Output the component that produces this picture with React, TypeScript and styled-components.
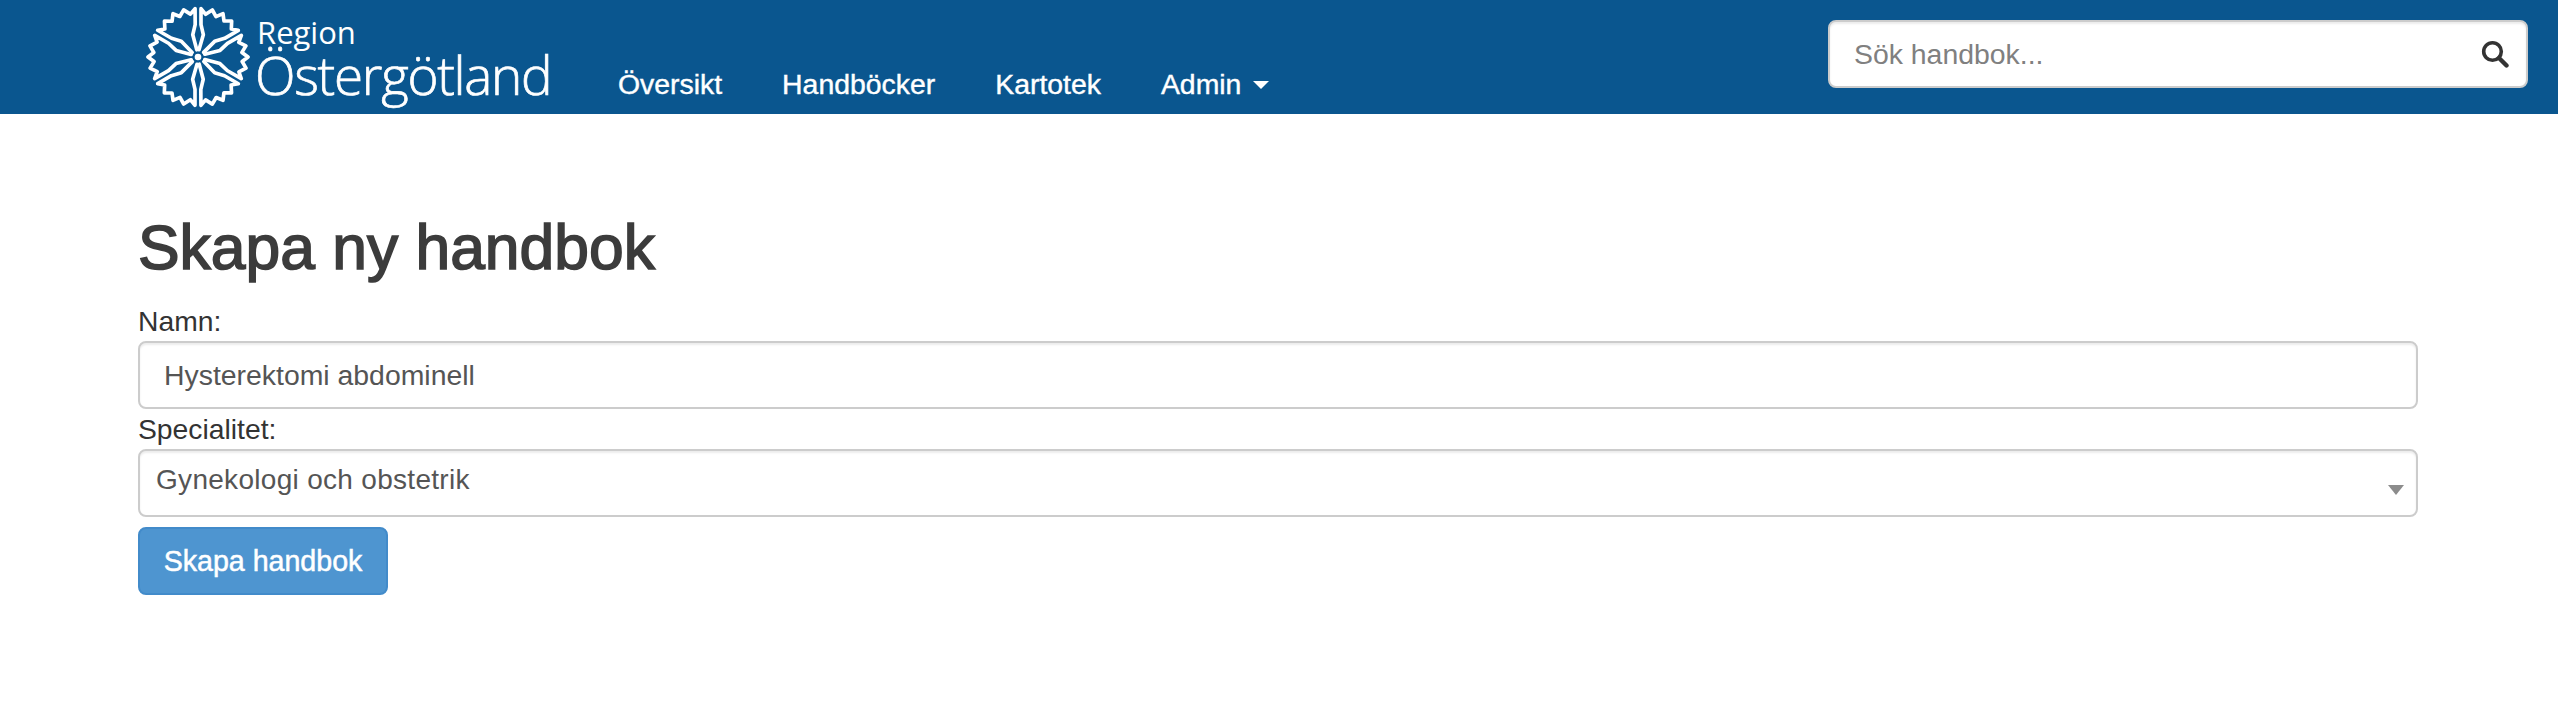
import React from 'react'
import styled, { createGlobalStyle } from 'styled-components'

const GlobalStyle = createGlobalStyle`
  * {
    box-sizing: border-box;
  }
  body {
    margin: 0;
    background: #fff;
    color: #333;
    font-family: 'Liberation Sans', Arial, sans-serif;
    font-size: 28px;
  }
`

const Header = styled.header`
  display: flex;
  align-items: flex-start;
  justify-content: space-between;
  height: 114px;
  padding: 0 30px 0 146px;
  background: #0a568f;
`

const Left = styled.div`
  display: flex;
  align-items: stretch;
  height: 100%;
`

const Brand = styled.a`
  display: flex;
  align-items: flex-start;
  gap: 5px;
  width: 472px;
  padding-top: 5px;
  color: #fff;
`

const BrandText = styled.div`
  display: flex;
  flex-direction: column;
  padding-top: 11px;
  font-family: 'Open Sans', 'Noto Sans', sans-serif;
`

const BrandTop = styled.span`
  margin-left: 2px;
  font-size: 31px;
  font-weight: 400;
  line-height: 32px;
`

const BrandBottom = styled.span`
  margin-top: 1px;
  font-size: 53px;
  font-weight: 300;
  line-height: 52px;
  letter-spacing: -1.3px;
  -webkit-text-stroke: 0.7px #fff;
`

const Nav = styled.nav`
  display: flex;
  align-items: flex-end;
  gap: 60px;
  padding-bottom: 14px;
`

const NavLink = styled.a`
  display: flex;
  align-items: center;
  gap: 12px;
  color: #fff;
  font-size: 28.4px;
  line-height: 32px;
  white-space: nowrap;
  -webkit-text-stroke: 0.4px #fff;
`

const Caret = styled.span`
  margin-top: 2px;
  border-top: 8px solid #fff;
  border-left: 8px solid transparent;
  border-right: 8px solid transparent;
`

const SearchBox = styled.div`
  position: relative;
  width: 700px;
  height: 68px;
  margin-top: 20px;
`

const SearchInput = styled.input`
  width: 100%;
  height: 100%;
  padding: 0 60px 0 24px;
  border: 2px solid #ccc;
  border-radius: 8px;
  box-shadow: inset 0 2px 2px rgba(0, 0, 0, 0.075);
  color: #555;
  font-family: inherit;
  font-size: 28.4px;
  outline: none;
  &::placeholder {
    color: #808080;
    opacity: 1;
  }
`

const SearchGlyph = styled.svg`
  position: absolute;
  top: 20px;
  right: 19px;
  width: 28px;
  height: 28px;
  color: #333;
`

const Main = styled.main`
  padding: 0 140px 0 138px;
`

const Title = styled.h1`
  margin: 99px 0 0;
  color: #3c3c3c;
  font-size: 62.4px;
  font-weight: 400;
  line-height: 70px;
  -webkit-text-stroke: 1.6px #3c3c3c;
`

const Form = styled.form`
  display: flex;
  flex-direction: column;
  align-items: flex-start;
  margin-top: 18px;
`

const Label = styled.label`
  display: block;
  color: #333;
  font-size: 28.3px;
  line-height: 40px;
`

const TextField = styled.input`
  display: block;
  width: 100%;
  height: 68px;
  padding: 0 24px;
  border: 2px solid #ccc;
  border-radius: 8px;
  box-shadow: inset 0 2px 2px rgba(0, 0, 0, 0.075);
  color: #555;
  font-family: inherit;
  font-size: 28.4px;
  outline: none;
`

const SelectWrap = styled.div`
  position: relative;
  width: 100%;
`

const SelectField = styled.select`
  display: block;
  width: 100%;
  height: 68px;
  padding: 0 16px 8px;
  border: 2px solid #ccc;
  border-radius: 8px;
  background: #fff;
  box-shadow: inset 0 2px 2px rgba(0, 0, 0, 0.075);
  color: #555;
  font-family: inherit;
  font-size: 28px;
  letter-spacing: 0.3px;
  appearance: none;
  outline: none;
`

const SelectArrow = styled.span`
  position: absolute;
  top: 36px;
  right: 14px;
  border-top: 10px solid #8c8c8c;
  border-left: 8px solid transparent;
  border-right: 8px solid transparent;
`

const SubmitButton = styled.button`
  margin-top: 10px;
  width: 250px;
  height: 68px;
  padding: 0;
  border: 2px solid #428bca;
  border-radius: 8px;
  background: #4e95d0;
  color: #fff;
  font-family: inherit;
  font-size: 28.6px;
  -webkit-text-stroke: 0.5px #fff;
`

// one petal; the next one is the same shape turned by 60 degrees
const PETAL =
  'M3 -22 L16 -67 L9 -97 L9 -145 L23 -128 L43 -141 L54 -121 L75 -130 L78 -108 L101 -108 L100 -84 L121 -80 L80 -56 L50 -47 L17 -14'

const Flower = () => (
  <svg width="104" height="104" viewBox="-156 -156 312 312" fill="none" style={{ flex: 'none' }}>
    {[0, 60, 120, 180, 240, 300].map((angle) => (
      <path
        key={angle}
        d={PETAL}
        transform={`rotate(${angle})`}
        stroke="#fff"
        strokeWidth="11"
        strokeLinejoin="round"
        strokeLinecap="round"
      />
    ))}
    <circle r="10" fill="#fff" />
  </svg>
)

const App = () => (
  <>
    <GlobalStyle />
    <Header>
      <Left>
        <Brand>
          <Flower />
          <BrandText>
            <BrandTop>Region</BrandTop>
            <BrandBottom>Östergötland</BrandBottom>
          </BrandText>
        </Brand>
        <Nav>
          <NavLink>Översikt</NavLink>
          <NavLink>Handböcker</NavLink>
          <NavLink>Kartotek</NavLink>
          <NavLink>
            Admin
            <Caret />
          </NavLink>
        </Nav>
      </Left>
      <SearchBox>
        <SearchInput placeholder="Sök handbok..." readOnly />
        <SearchGlyph viewBox="0 0 28 28" fill="none">
          <circle cx="11.5" cy="11.5" r="8.8" stroke="currentColor" strokeWidth="3.6" />
          <path d="M18 18 L25.5 25.5" stroke="currentColor" strokeWidth="4.4" strokeLinecap="round" />
        </SearchGlyph>
      </SearchBox>
    </Header>
    <Main>
      <Title>Skapa ny handbok</Title>
      <Form>
        <Label>Namn:</Label>
        <TextField defaultValue="Hysterektomi abdominell" />
        <Label>Specialitet:</Label>
        <SelectWrap>
          <SelectField defaultValue="gyn">
            <option value="gyn">Gynekologi och obstetrik</option>
          </SelectField>
          <SelectArrow />
        </SelectWrap>
        <SubmitButton type="button">Skapa handbok</SubmitButton>
      </Form>
    </Main>
  </>
)

export default App
